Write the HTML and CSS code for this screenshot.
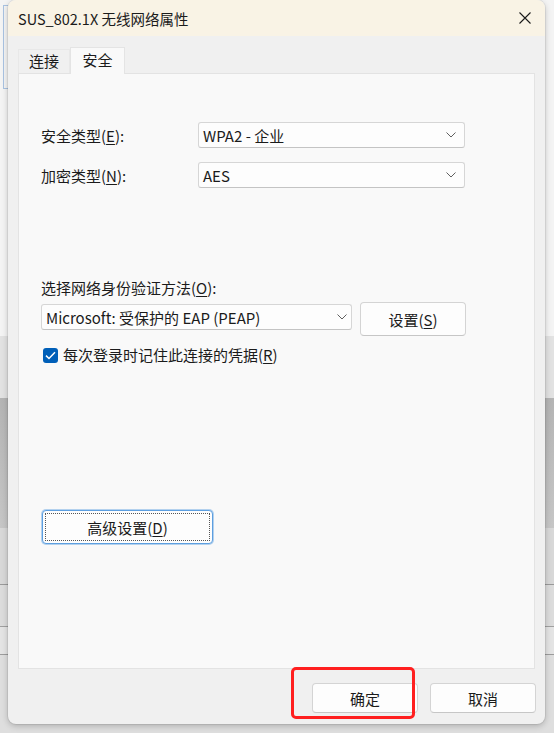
FILE: index.html
```html
<!DOCTYPE html>
<html lang="zh-CN">
<head>
<meta charset="utf-8">
<title>SUS_802.1X 无线网络属性</title>
<link rel="stylesheet" href="styles.css">
</head>
<body>
<div class="backdrop-box"></div>
<div class="window">
  <div class="titlebar">
    <span class="title">SUS_802.1X 无线网络属性</span>
    <svg class="close" width="12" height="12" viewBox="0 0 12 12"><path d="M0.5 0.5 L11.5 11.5 M11.5 0.5 L0.5 11.5" stroke="#1a1a1a" stroke-width="1.1" fill="none"/></svg>
  </div>
  <div class="content">
    <div class="tabs">
      <div class="tab">连接</div>
      <div class="tab tab-active">安全</div>
    </div>
    <div class="panel">
      <div class="field-row">
        <span class="label">安全类型(<u>E</u>):</span>
        <div class="select select-wide"><span>WPA2 - 企业</span><svg class="chev" width="10" height="6" viewBox="0 0 10 6"><path d="M0.5 0.5 L5 5 L9.5 0.5" stroke="#5f5f5f" stroke-width="1" fill="none"/></svg></div>
      </div>
      <div class="field-row row-2">
        <span class="label">加密类型(<u>N</u>):</span>
        <div class="select select-wide"><span>AES</span><svg class="chev" width="10" height="6" viewBox="0 0 10 6"><path d="M0.5 0.5 L5 5 L9.5 0.5" stroke="#5f5f5f" stroke-width="1" fill="none"/></svg></div>
      </div>
      <div class="label method-label">选择网络身份验证方法(<u>O</u>):</div>
      <div class="method-row">
        <div class="select select-method"><span>Microsoft: 受保护的 EAP (PEAP)</span><svg class="chev" width="10" height="6" viewBox="0 0 10 6"><path d="M0.5 0.5 L5 5 L9.5 0.5" stroke="#5f5f5f" stroke-width="1" fill="none"/></svg></div>
        <div class="btn btn-settings">设置(<u>S</u>)</div>
      </div>
      <div class="check-row">
        <span class="checkbox"><svg width="11" height="9" viewBox="0 0 11 9"><path d="M1 4.6 L4 7.5 L10 1.3" stroke="#ffffff" stroke-width="1.5" fill="none"/></svg></span>
        <span class="label">每次登录时记住此连接的凭据(<u>R</u>)</span>
      </div>
      <div class="btn btn-advanced"><span class="focus-ring">高级设置(<u>D</u>)</span></div>
    </div>
    <div class="button-row">
      <div class="btn btn-dialog">确定</div>
      <div class="btn btn-dialog">取消</div>
      <div class="annotation"></div>
    </div>
  </div>
</div>
</body>
</html>
```
FILE: styles.css
```css
* { box-sizing: border-box; }
html, body { margin: 0; padding: 0; }
body {
  width: 554px;
  height: 733px;
  overflow: hidden;
  position: relative;
  font-family: "Noto Sans CJK SC", "Noto Sans", sans-serif;
  font-size: 15px;
  color: #1b1b1b;
  background:
    linear-gradient(to bottom,
      #f4f4f4 0px, #f4f4f4 336px,
      #e2e2e2 336px, #e2e2e2 398px,
      #b4b4b4 398px, #c6c6c6 528px,
      #d8d8d8 528px, #d8d8d8 584px,
      #9a9a9a 584px, #9a9a9a 585px,
      #dcdcdc 585px, #dcdcdc 626px,
      #a0a0a0 626px, #a0a0a0 627px,
      #e4e4e4 627px, #e4e4e4 654px,
      #9c9c9c 654px, #9c9c9c 655px,
      #dedede 655px, #dedede 733px);
}
.backdrop-box {
  position: absolute;
  left: 3px;
  top: 5px;
  width: 20px;
  height: 84px;
  border: 1px solid #a9c3e2;
}
.window {
  position: relative;
  margin-left: 8px;
  width: 537px;
  height: 724px;
  background: #f0f0f0;
  border-radius: 8px;
  box-shadow: 0 2px 6px rgba(0,0,0,0.22), 0 0 0 1px rgba(0,0,0,0.06);
  overflow: hidden;
  display: flex;
  flex-direction: column;
}
.titlebar {
  height: 36px;
  background: #f9f3e5;
  display: flex;
  align-items: center;
  justify-content: space-between;
  padding: 0 14px 0 10px;
  flex: none;
}
.title { font-size: 14.5px; letter-spacing: 0; }
.close { display: block; }
.content {
  padding: 11px 10px 0 10px;
  flex: 1;
  display: flex;
  flex-direction: column;
}
.tabs {
  display: flex;
  align-items: flex-end;
  height: 26px;
}
.tab {
  height: 24px;
  width: 52px;
  display: flex;
  align-items: center;
  justify-content: center;
  padding-bottom: 2px;
  border: 1px solid #e8e8e8;
  border-bottom: none;
  background: #f0f0f0;
}
.tab-active {
  height: 27px;
  width: 55px;
  margin-bottom: -1px;
  background: #f9f9f9;
  border-color: #e4e4e4;
  position: relative;
  z-index: 1;
  padding-bottom: 4px;
}
.panel {
  height: 596px;
  background: #f9f9f9;
  border: 1px solid #e3e3e3;
  padding: 48px 0 0 22px;
  display: flex;
  flex-direction: column;
  align-items: flex-start;
}
.field-row {
  display: flex;
  align-items: center;
  height: 26px;
}
.row-2 { margin-top: 14px; }
.field-row .label { width: 157px; }
.select {
  height: 26px;
  background: #fdfdfd;
  border: 1px solid #d6d6d6;
  border-bottom-color: #c4c4c4;
  border-radius: 3px;
  display: flex;
  align-items: center;
  justify-content: space-between;
  padding: 0 8px 0 4px;
  white-space: nowrap;
}
.select-wide { width: 267px; }
.chev { display: block; flex: none; }
.method-label { margin-top: 90px; line-height: 20px; }
.method-row {
  display: flex;
  align-items: flex-start;
  margin-top: 4px;
}
.select-method { width: 311px; margin-top: 2px; padding-right: 4px; }
.btn {
  background: #fdfdfd;
  border: 1px solid #d4d4d4;
  border-bottom-color: #c6c6c6;
  border-radius: 4px;
  display: flex;
  align-items: center;
  justify-content: center;
}
.btn-settings {
  width: 106px;
  height: 34px;
  margin-left: 8px;
}
.check-row {
  display: flex;
  align-items: center;
  margin-top: 9px;
  margin-left: 2px;
  line-height: 20px;
}
.checkbox {
  width: 15px;
  height: 15px;
  border-radius: 3px;
  background: #005fb8;
  display: flex;
  align-items: center;
  justify-content: center;
  margin-right: 5px;
}
.checkbox svg { display: block; }
.btn-advanced {
  width: 171px;
  height: 34px;
  margin-top: 145px;
  margin-left: 1px;
  border: 1px solid #5d9fe0;
  box-shadow: 0 0 0 1px rgba(93,159,224,0.45);
  padding: 2px;
}
.focus-ring {
  width: 100%;
  height: 100%;
  display: flex;
  align-items: center;
  justify-content: center;
  outline: 1px dotted #555;
  outline-offset: -1px;
}
.button-row {
  position: relative;
  display: flex;
  justify-content: flex-end;
  gap: 12px;
  margin-top: 14px;
  margin-right: -1px;
}
.btn-dialog {
  width: 106px;
  height: 30px;
}
.annotation {
  position: absolute;
  left: 273px;
  top: -16px;
  width: 124px;
  height: 52px;
  border: 3px solid #ff1f1f;
  border-radius: 5px;
}
u { text-decoration-thickness: 1px; text-underline-offset: 2px; }
```
